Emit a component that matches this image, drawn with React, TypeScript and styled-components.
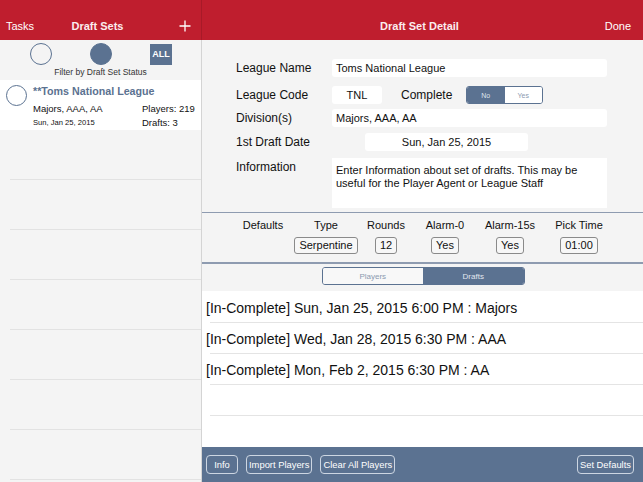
import React from "react";
import styled, { createGlobalStyle } from "styled-components";

const RED = "#bf1e2e";
const SLATE = "#5b7291";
const PANEL = "#f4f4f4";
const RULE = "#8e9bb0";

const GlobalStyle = createGlobalStyle`
  body {
    margin: 0;
    background: #ffffff;
    font-family: "Liberation Sans", Arial, sans-serif;
    color: #111111;
  }
`;

const drafts = [
  "[In-Complete] Sun, Jan 25, 2015 6:00 PM : Majors",
  "[In-Complete] Wed, Jan 28, 2015 6:30 PM : AAA",
  "[In-Complete] Mon, Feb 2, 2015 6:30 PM : AA",
  "",
];

const defaults = [
  { label: "Type", value: "Serpentine", width: 60 },
  { label: "Rounds", value: "12", width: 60 },
  { label: "Alarm-0", value: "Yes", width: 58 },
  { label: "Alarm-15s", value: "Yes", width: 72 },
  { label: "Pick Time", value: "01:00", width: 66 },
];

const App = () => {
  return (
    <>
      <GlobalStyle />
      <Screen>
        <Sidebar>
          <NavBar $divider>
            <NavLink>Tasks</NavLink>
            <NavTitle>Draft Sets</NavTitle>
            <NavAction>
              <svg width="12" height="12" viewBox="0 0 12 12">
                <path d="M6 0.5V11.5M0.5 6H11.5" stroke="#fff" strokeWidth="1.3" />
              </svg>
            </NavAction>
          </NavBar>
          <FilterBar>
            <FilterIcons>
              <StatusDot />
              <StatusDot $filled />
              <AllBadge>ALL</AllBadge>
            </FilterIcons>
            <FilterCaption>Filter by Draft Set Status</FilterCaption>
          </FilterBar>
          <SetCard>
            <CardDot />
            <CardBody>
              <CardTitle>**Toms National League</CardTitle>
              <CardGrid>
                <CardText>Majors, AAA, AA</CardText>
                <CardText>Players: 219</CardText>
                <CardSmall>Sun, Jan 25, 2015</CardSmall>
                <CardText>Drafts: 3</CardText>
              </CardGrid>
            </CardBody>
          </SetCard>
          {Array.from({ length: 7 }).map((_, i) => (
            <EmptyRow key={i} />
          ))}
        </Sidebar>

        <Detail>
          <NavBar>
            <span />
            <NavTitle>Draft Set Detail</NavTitle>
            <NavLink $right>Done</NavLink>
          </NavBar>

          <Form>
            <FormRow>
              <Label>League Name</Label>
              <Field>Toms National League</Field>
            </FormRow>
            <FormRow $extra={4}>
              <Label>League Code</Label>
              <Field $width={50} $center>
                TNL
              </Field>
              <InlineLabel>Complete</InlineLabel>
              <Toggle>
                <ToggleHalf $active>No</ToggleHalf>
                <ToggleHalf>Yes</ToggleHalf>
              </Toggle>
            </FormRow>
            <FormRow>
              <Label>Division(s)</Label>
              <Field>Majors, AAA, AA</Field>
            </FormRow>
            <FormRow $extra={1}>
              <Label>1st Draft Date</Label>
              <Field $width={163} $center $offset={33}>
                Sun, Jan 25, 2015
              </Field>
            </FormRow>
            <FormRow $extra={2} $tall>
              <Label>Information</Label>
              <TextArea>
                Enter Information about set of drafts. This may be useful for
                the Player Agent or League Staff
              </TextArea>
            </FormRow>
          </Form>

          <Defaults>
            <DefaultCol $width={66}>
              <DefaultLabel>Defaults</DefaultLabel>
            </DefaultCol>
            {defaults.map((d) => (
              <DefaultCol key={d.label} $width={d.width}>
                <DefaultLabel>{d.label}</DefaultLabel>
                <ValueBox>{d.value}</ValueBox>
              </DefaultCol>
            ))}
          </Defaults>

          <SegmentBar>
            <Segment>
              <SegmentHalf>Players</SegmentHalf>
              <SegmentHalf $active>Drafts</SegmentHalf>
            </Segment>
          </SegmentBar>

          <DraftList>
            {drafts.map((d, i) => (
              <DraftRow key={i}>{d}</DraftRow>
            ))}
          </DraftList>

          <Toolbar>
            <ToolButton>Info</ToolButton>
            <ToolButton>Import Players</ToolButton>
            <ToolButton>Clear All Players</ToolButton>
            <ToolSpacer />
            <ToolButton>Set Defaults</ToolButton>
          </Toolbar>
        </Detail>
      </Screen>
    </>
  );
};

export default App;

const Screen = styled.div`
  width: 643px;
  height: 482px;
  display: flex;
  overflow: hidden;
`;

const Sidebar = styled.div`
  width: 201px;
  flex-shrink: 0;
  background-color: ${PANEL};
  border-right: 1px solid #d4d4d4;
  display: flex;
  flex-direction: column;
`;

const Detail = styled.div`
  flex: 1;
  display: flex;
  flex-direction: column;
  min-width: 0;
`;

const NavBar = styled.div<{ $divider?: boolean }>`
  height: 40px;
  flex-shrink: 0;
  box-sizing: border-box;
  padding: 16px 12px 0 6px;
  background-color: ${RED};
  color: #ffffff;
  display: grid;
  grid-template-columns: 1fr auto 1fr;
  align-items: start;
  font-size: 11px;
  line-height: 20px;
  margin-right: ${({ $divider }) => ($divider ? "-1px" : "0")};
  border-right: ${({ $divider }) =>
    $divider ? "1px solid #a81a28" : "none"};
`;

const NavLink = styled.span<{ $right?: boolean }>`
  justify-self: ${({ $right }) => ($right ? "end" : "start")};
  font-weight: 400;
`;

const NavTitle = styled.span`
  font-weight: 700;
  color: #fbecee;
`;

const NavAction = styled.span`
  justify-self: end;
  display: flex;
  align-items: center;
  height: 20px;
  margin-right: -2px;
`;

const FilterBar = styled.div`
  height: 40px;
  box-sizing: border-box;
  padding-top: 3px;
  display: flex;
  flex-direction: column;
  align-items: center;
`;

const FilterIcons = styled.div`
  display: flex;
  align-items: center;
  gap: 38px;
  height: 22px;
  padding-left: 1px;
`;

const StatusDot = styled.div<{ $filled?: boolean }>`
  width: 22px;
  height: 22px;
  box-sizing: border-box;
  border-radius: 50%;
  border: 1px solid ${SLATE};
  background-color: ${({ $filled }) => ($filled ? SLATE : "transparent")};
`;

const AllBadge = styled.div`
  width: 22px;
  height: 21px;
  background-color: ${SLATE};
  color: #ffffff;
  font-size: 9px;
  font-weight: 700;
  display: flex;
  align-items: center;
  justify-content: center;
`;

const FilterCaption = styled.div`
  margin-top: 2px;
  font-size: 8.5px;
  line-height: 10px;
  color: #333333;
`;

const SetCard = styled.div`
  height: 50px;
  box-sizing: border-box;
  background-color: #ffffff;
  display: flex;
  padding: 5px 0 0 6px;
`;

const CardDot = styled.div`
  width: 21px;
  height: 21px;
  box-sizing: border-box;
  border-radius: 50%;
  border: 1px solid ${SLATE};
  flex-shrink: 0;
`;

const CardBody = styled.div`
  margin-left: 6px;
  flex: 1;
`;

const CardTitle = styled.div`
  font-size: 10.7px;
  font-weight: 700;
  color: ${SLATE};
  line-height: 13px;
`;

const CardGrid = styled.div`
  display: grid;
  grid-template-columns: 109px auto;
  grid-auto-rows: 14px;
  align-items: center;
  margin-top: 3px;
`;

const CardText = styled.div`
  font-size: 9.5px;
  color: #111111;
`;

const CardSmall = styled.div`
  font-size: 7.6px;
  color: #111111;
`;

const EmptyRow = styled.div`
  height: 49px;
  flex-shrink: 0;
  margin-left: 10px;
  border-bottom: 1px solid #e2e2e2;
`;

const Form = styled.div`
  height: 172px;
  flex-shrink: 0;
  box-sizing: border-box;
  background-color: ${PANEL};
  padding: 19px 36px 0 34px;
  display: flex;
  flex-direction: column;
  gap: 5px;
`;

const FormRow = styled.div<{ $extra?: number; $tall?: boolean }>`
  display: flex;
  align-items: ${({ $tall }) => ($tall ? "flex-start" : "center")};
  height: ${({ $tall }) => ($tall ? "50px" : "18px")};
  margin-top: ${({ $extra }) => $extra ?? 0}px;
`;

const Label = styled.div`
  width: 96px;
  flex-shrink: 0;
  font-size: 12px;
  line-height: 18px;
  color: #111111;
`;

const Field = styled.div<{ $width?: number; $center?: boolean; $offset?: number }>`
  box-sizing: border-box;
  height: 18px;
  ${({ $width }) => ($width ? `width: ${$width}px;` : "flex: 1;")}
  margin-left: ${({ $offset }) => $offset ?? 0}px;
  background-color: #ffffff;
  border-radius: 3px;
  padding: 0 4px;
  font-size: 11px;
  line-height: 18px;
  text-align: ${({ $center }) => ($center ? "center" : "left")};
  color: #111111;
`;

const InlineLabel = styled.div`
  margin-left: 19px;
  width: 65px;
  font-size: 12px;
  color: #111111;
`;

const Toggle = styled.div`
  display: flex;
  width: 77px;
  height: 18px;
  box-sizing: border-box;
  border: 1px solid ${SLATE};
  border-radius: 3px;
  overflow: hidden;
  background-color: #ffffff;
`;

const ToggleHalf = styled.div<{ $active?: boolean }>`
  flex: 1;
  display: flex;
  align-items: center;
  justify-content: center;
  font-size: 7px;
  background-color: ${({ $active }) => ($active ? SLATE : "#ffffff")};
  color: ${({ $active }) => ($active ? "#dfe5ee" : "#8c9ab0")};
`;

const TextArea = styled.div`
  flex: 1;
  height: 50px;
  box-sizing: border-box;
  background-color: #ffffff;
  padding: 6px 4px;
  font-size: 11px;
  line-height: 13px;
  color: #111111;
`;

const Defaults = styled.div`
  height: 50px;
  flex-shrink: 0;
  box-sizing: border-box;
  border-top: 1px solid ${RULE};
  background-color: ${PANEL};
  display: flex;
  padding: 4px 0 0 28px;
`;

const DefaultCol = styled.div<{ $width: number }>`
  width: ${({ $width }) => $width}px;
  display: flex;
  flex-direction: column;
  align-items: center;
`;

const DefaultLabel = styled.div`
  font-size: 11px;
  line-height: 16px;
  color: #111111;
`;

const ValueBox = styled.div`
  margin-top: 4px;
  height: 17px;
  box-sizing: border-box;
  padding: 0 4px;
  border: 1px solid #8a8a8a;
  border-radius: 3px;
  font-size: 11px;
  line-height: 15px;
  color: #111111;
  background-color: #f7f7f7;
`;

const SegmentBar = styled.div`
  height: 29px;
  flex-shrink: 0;
  box-sizing: border-box;
  border-top: 2px solid ${RULE};
  background-color: ${PANEL};
  display: flex;
  justify-content: center;
  padding: 3px 0 0 1px;
`;

const Segment = styled.div`
  display: flex;
  width: 203px;
  height: 18px;
  box-sizing: border-box;
  border: 1px solid ${SLATE};
  border-radius: 3px;
  overflow: hidden;
`;

const SegmentHalf = styled.div<{ $active?: boolean }>`
  flex: 1;
  display: flex;
  align-items: center;
  justify-content: center;
  font-size: 8px;
  background-color: ${({ $active }) => ($active ? SLATE : "#f8f8f8")};
  color: ${({ $active }) => ($active ? "#e2e7ef" : "#8c9ab0")};
`;

const DraftList = styled.div`
  flex: 1;
  background-color: #ffffff;
`;

const DraftRow = styled.div`
  height: 31px;
  box-sizing: border-box;
  padding: 1px 0 0 4px;
  background-image: linear-gradient(#e4e4e4, #e4e4e4);
  background-size: calc(100% - 8px) 1px;
  background-position: 8px 100%;
  background-repeat: no-repeat;
  display: flex;
  align-items: center;
  font-size: 14px;
  color: #111111;
  &:first-child {
    height: 32px;
    padding-top: 2px;
  }
`;

const Toolbar = styled.div`
  height: 35px;
  flex-shrink: 0;
  box-sizing: border-box;
  background-color: ${SLATE};
  display: flex;
  align-items: flex-start;
  gap: 8px;
  padding: 8px 9px 0 4px;
`;

const ToolButton = styled.div`
  height: 19px;
  box-sizing: border-box;
  padding: 0 2px;
  min-width: 32px;
  border: 1px solid #cdd6e2;
  border-radius: 4px;
  color: #ffffff;
  font-size: 9.4px;
  line-height: 17px;
  text-align: center;
`;

const ToolSpacer = styled.div`
  flex: 1;
`;
